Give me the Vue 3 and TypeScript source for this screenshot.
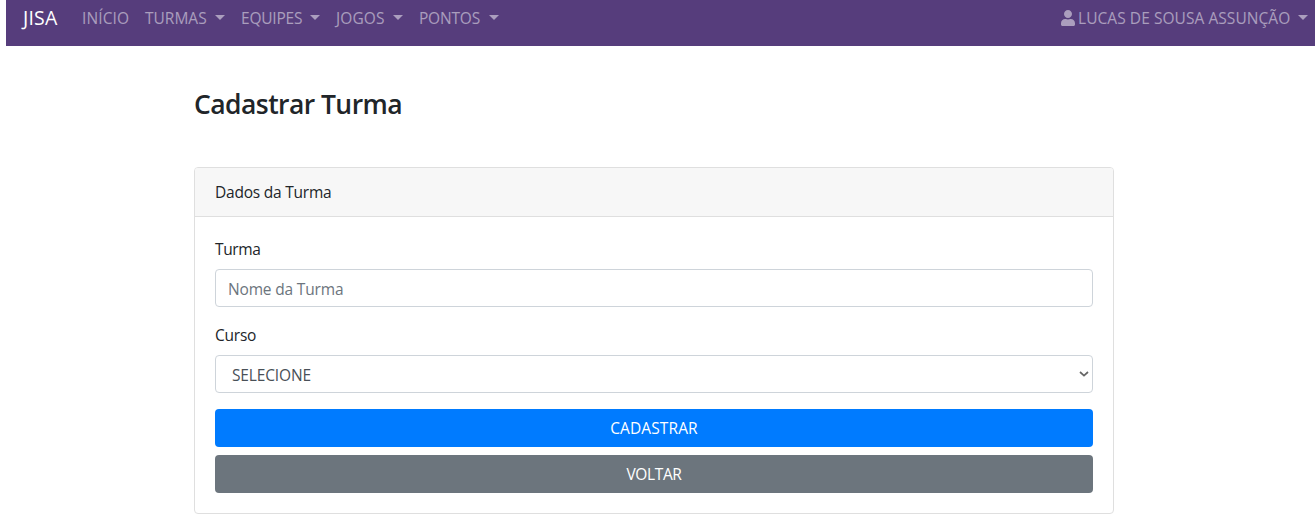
<script setup lang="ts">
import { ref } from 'vue'

interface MenuItem {
  label: string
  key: string
  dropdown: boolean
}

const menu: MenuItem[] = [
  { label: 'INÍCIO', key: 'inicio', dropdown: false },
  { label: 'TURMAS', key: 'turmas', dropdown: true },
  { label: 'EQUIPES', key: 'equipes', dropdown: true },
  { label: 'JOGOS', key: 'jogos', dropdown: true },
  { label: 'PONTOS', key: 'pontos', dropdown: true },
]
const turma = ref<string>('')
</script>

<template>
  <div class="page">
    <nav class="navbar">
      <a class="brand"><span>JISA</span></a>
      <a v-for="item in menu" :key="item.key" class="nav-link" :class="item.key">
        <span class="label">{{ item.label }}</span>
        <i v-if="item.dropdown" class="caret"></i>
      </a>
      <a class="nav-link user">
        <svg class="user-icon" viewBox="0 0 448 512" aria-hidden="true">
          <path fill="currentColor" d="M224 256c70.7 0 128-57.3 128-128S294.7 0 224 0 96 57.3 96 128s57.3 128 128 128zm89.6 32h-16.7c-22.2 10.2-46.900 16-72.900 16s-50.600-5.800-72.900-16h-16.700C60.200 288 0 348.200 0 422.400V464c0 26.500 21.500 48 48 48h352c26.500 0 48-21.500 48-48v-41.600c0-74.200-60.200-134.400-134.400-134.400z" />
        </svg>
        <span class="label">LUCAS DE SOUSA ASSUNÇÃO</span>
        <i class="caret"></i>
      </a>
    </nav>

    <main class="container">
      <h1><span>Cadastrar Turma</span></h1>
      <section class="card">
        <header class="card-header"><span class="t-dados">Dados da Turma</span></header>
        <form class="card-body" @submit.prevent>
          <label for="turma"><span class="t-turma">Turma</span></label>
          <input id="turma" v-model="turma" class="control" type="text" placeholder="Nome da Turma" />
          <label for="curso" class="second"><span class="t-curso">Curso</span></label>
          <div id="curso" class="control select" role="combobox" tabindex="0">
            <span class="t-select">SELECIONE</span>
            <svg class="chevron" viewBox="0 0 10 6" aria-hidden="true">
              <path d="M1 1 L5 4.600 L9 1" fill="none" stroke="#666" stroke-width="1.700" />
            </svg>
          </div>
          <button type="submit" class="btn primary"><span class="t-cad">CADASTRAR</span></button>
          <button type="button" class="btn secondary"><span class="t-volt">VOLTAR</span></button>
        </form>
      </section>
    </main>
  </div>
</template>

<style>
body {
  background: #fff;
}
</style>

<style scoped>
.page,
.page * {
  box-sizing: border-box;
}
.page {
  height: 525px;
  overflow: hidden;
  font-family: "Open Sans", "Noto Sans", sans-serif;
  font-size: 15.5px;
  line-height: 24px;
  color: #212529;
}
.page span {
  white-space: nowrap;
}
.navbar {
  display: flex;
  align-items: flex-start;
  height: 46px;
  margin-left: 6px;
  padding: 6px 7px 0 16px;
  background: #563d7c;
  color: rgba(255, 255, 255, 0.5);
}
.brand {
  width: 60px;
  padding-left: 1px;
  color: #fff;
  font-size: 19.5px;
  letter-spacing: 0.2px;
}
.nav-link {
  display: flex;
  align-items: center;
  margin-right: 16px;
  letter-spacing: -0.2px;
}
.inicio .label {
  width: 47px;
  letter-spacing: 0.1px;
}
.turmas .label {
  width: 62px;
  letter-spacing: 0;
}
.equipes .label {
  width: 61px;
}
.jogos .label {
  width: 49px;
  letter-spacing: 0.1px;
}
.pontos .label {
  width: 62px;
}
.caret {
  width: 10px;
  height: 5px;
  margin: 0 0 1px 8px;
  background: currentColor;
  clip-path: polygon(0 0, 100% 0, 50% 100%);
}
.user {
  margin: 0 0 0 auto;
}
.user-icon {
  width: 14px;
  height: 16px;
  margin: 0 3px 1px 0;
}
.user .label {
  width: 212px;
  letter-spacing: 0.06px;
}
.container {
  width: 920px;
  margin-left: 194px;
}
h1 {
  margin: 41px 0 46px;
  font-size: 26.5px;
  font-weight: 600;
  line-height: 34px;
  letter-spacing: -0.56px;
}
.card {
  height: 347px;
  border: 1px solid #dfdfdf;
  border-radius: 4px;
}
.card-header {
  height: 49px;
  padding: 12px 20px;
  background: #f7f7f7;
  border-bottom: 1px solid #dfdfdf;
  border-radius: 3px 3px 0 0;
}
.t-dados,
.t-curso {
  letter-spacing: -0.22px;
}
.t-turma {
  letter-spacing: -0.4px;
}
.t-select {
  letter-spacing: -0.15px;
}
.t-cad {
  letter-spacing: 0.1px;
}
.t-volt {
  letter-spacing: -0.35px;
}
.card-body {
  display: flex;
  flex-direction: column;
  padding: 20px;
}
label {
  height: 24px;
  margin-bottom: 8px;
}
label.second {
  margin-top: 16px;
}
.control {
  width: 100%;
  height: 38px;
  padding: 1px 12px 0;
  border: 1px solid #ced4da;
  border-radius: 4px;
  background: #fff;
  color: #495057;
  font: inherit;
  letter-spacing: -0.17px;
  outline: none;
}
.control::placeholder {
  color: #6c757d;
  opacity: 1;
}
.select {
  display: flex;
  align-items: center;
  justify-content: space-between;
  padding: 1px 3px 0 16px;
}
.chevron {
  width: 10px;
  height: 6px;
  margin-bottom: 1px;
}
.btn {
  height: 38px;
  padding: 0;
  border: 0;
  border-radius: 4px;
  color: #fff;
  font: inherit;
}
.primary {
  margin-top: 16px;
  background: #007bff;
}
.secondary {
  margin-top: 8px;
  background: #6c757d;
}
</style>
